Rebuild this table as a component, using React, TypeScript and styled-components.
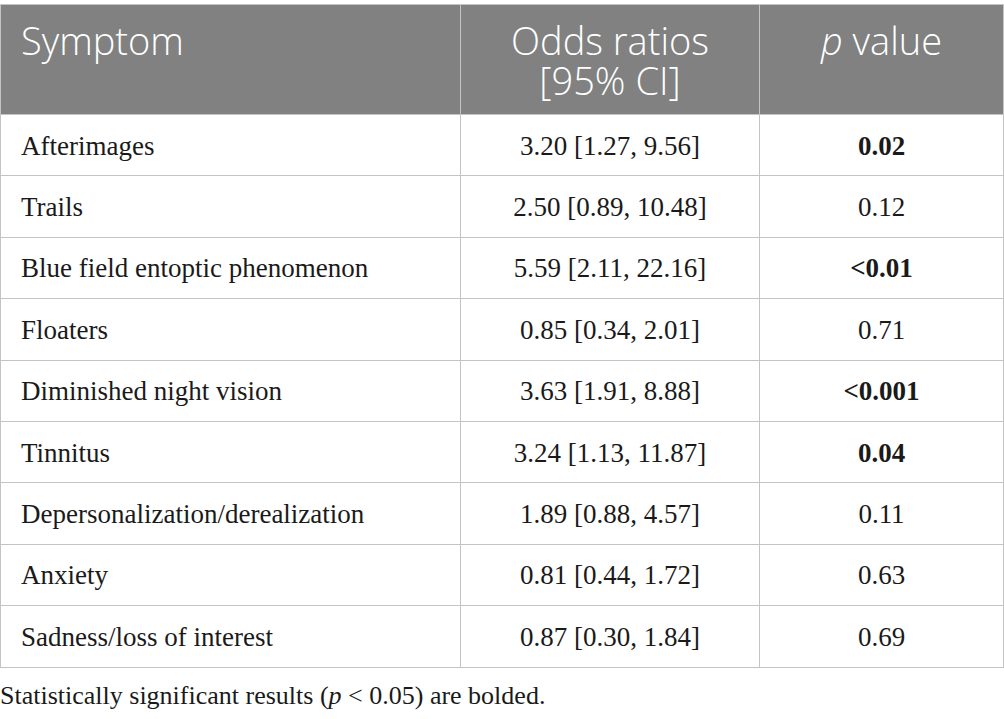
import React from "react";
import styled, { createGlobalStyle } from "styled-components";

const Global = createGlobalStyle`
  html, body { margin: 0; padding: 0; background: #ffffff; }
  body { font-family: "Liberation Serif", "Times New Roman", serif; }
`;

const Page = styled.div`
  width: 1004px;
  padding-top: 4px;
  box-sizing: border-box;
`;

const Table = styled.table`
  width: 1003px;
  border-collapse: collapse;
  table-layout: fixed;
`;

const HeadCell = styled.th<{ $align?: "left" | "center" }>`
  background: #808180;
  color: #ffffff;
  font-family: "Open Sans", "Liberation Sans", sans-serif;
  font-weight: 300;
  font-size: 38px;
  line-height: 40px;
  text-align: ${(p) => p.$align || "center"};
  vertical-align: top;
  padding: 15px 20px 0 20px;
  height: 110px;
  border: 1px solid #c4c4c4;
  box-sizing: border-box;
`;

const Row = styled.tr`
  height: 61.4px;
`;

const Cell = styled.td<{ $align?: "left" | "center"; $bold?: boolean }>`
  font-family: "Liberation Serif", "Times New Roman", serif;
  font-size: 27px;
  color: #1a1a1a;
  font-weight: ${(p) => (p.$bold ? 700 : 400)};
  text-align: ${(p) => p.$align || "center"};
  vertical-align: middle;
  padding: 2px 20px 0 20px;
  border: 1px solid #c4c4c4;
`;

const Note = styled.p`
  margin: 13px 0 0 0;
  font-family: "Liberation Serif", "Times New Roman", serif;
  font-size: 26px;
  color: #1a1a1a;
`;

const rows: { s: string; or: string; p: string; bold: boolean }[] = [
  { s: "Afterimages", or: "3.20 [1.27, 9.56]", p: "0.02", bold: true },
  { s: "Trails", or: "2.50 [0.89, 10.48]", p: "0.12", bold: false },
  { s: "Blue field entoptic phenomenon", or: "5.59 [2.11, 22.16]", p: "<0.01", bold: true },
  { s: "Floaters", or: "0.85 [0.34, 2.01]", p: "0.71", bold: false },
  { s: "Diminished night vision", or: "3.63 [1.91, 8.88]", p: "<0.001", bold: true },
  { s: "Tinnitus", or: "3.24 [1.13, 11.87]", p: "0.04", bold: true },
  { s: "Depersonalization/derealization", or: "1.89 [0.88, 4.57]", p: "0.11", bold: false },
  { s: "Anxiety", or: "0.81 [0.44, 1.72]", p: "0.63", bold: false },
  { s: "Sadness/loss of interest", or: "0.87 [0.30, 1.84]", p: "0.69", bold: false },
];

export default function App() {
  return (
    <Page>
      <Global />
      <Table>
        <colgroup>
          <col style={{ width: 460 }} />
          <col style={{ width: 299 }} />
          <col style={{ width: 244 }} />
        </colgroup>
        <thead>
          <tr>
            <HeadCell $align="left">Symptom</HeadCell>
            <HeadCell>
              Odds ratios
              <br />
              [95% CI]
            </HeadCell>
            <HeadCell>
              <i>p</i> value
            </HeadCell>
          </tr>
        </thead>
        <tbody>
          {rows.map((r) => (
            <Row key={r.s}>
              <Cell $align="left">{r.s}</Cell>
              <Cell>{r.or}</Cell>
              <Cell $bold={r.bold}>{r.p}</Cell>
            </Row>
          ))}
        </tbody>
      </Table>
      <Note>
        Statistically significant results (<i>p</i> &lt; 0.05) are bolded.
      </Note>
    </Page>
  );
}
